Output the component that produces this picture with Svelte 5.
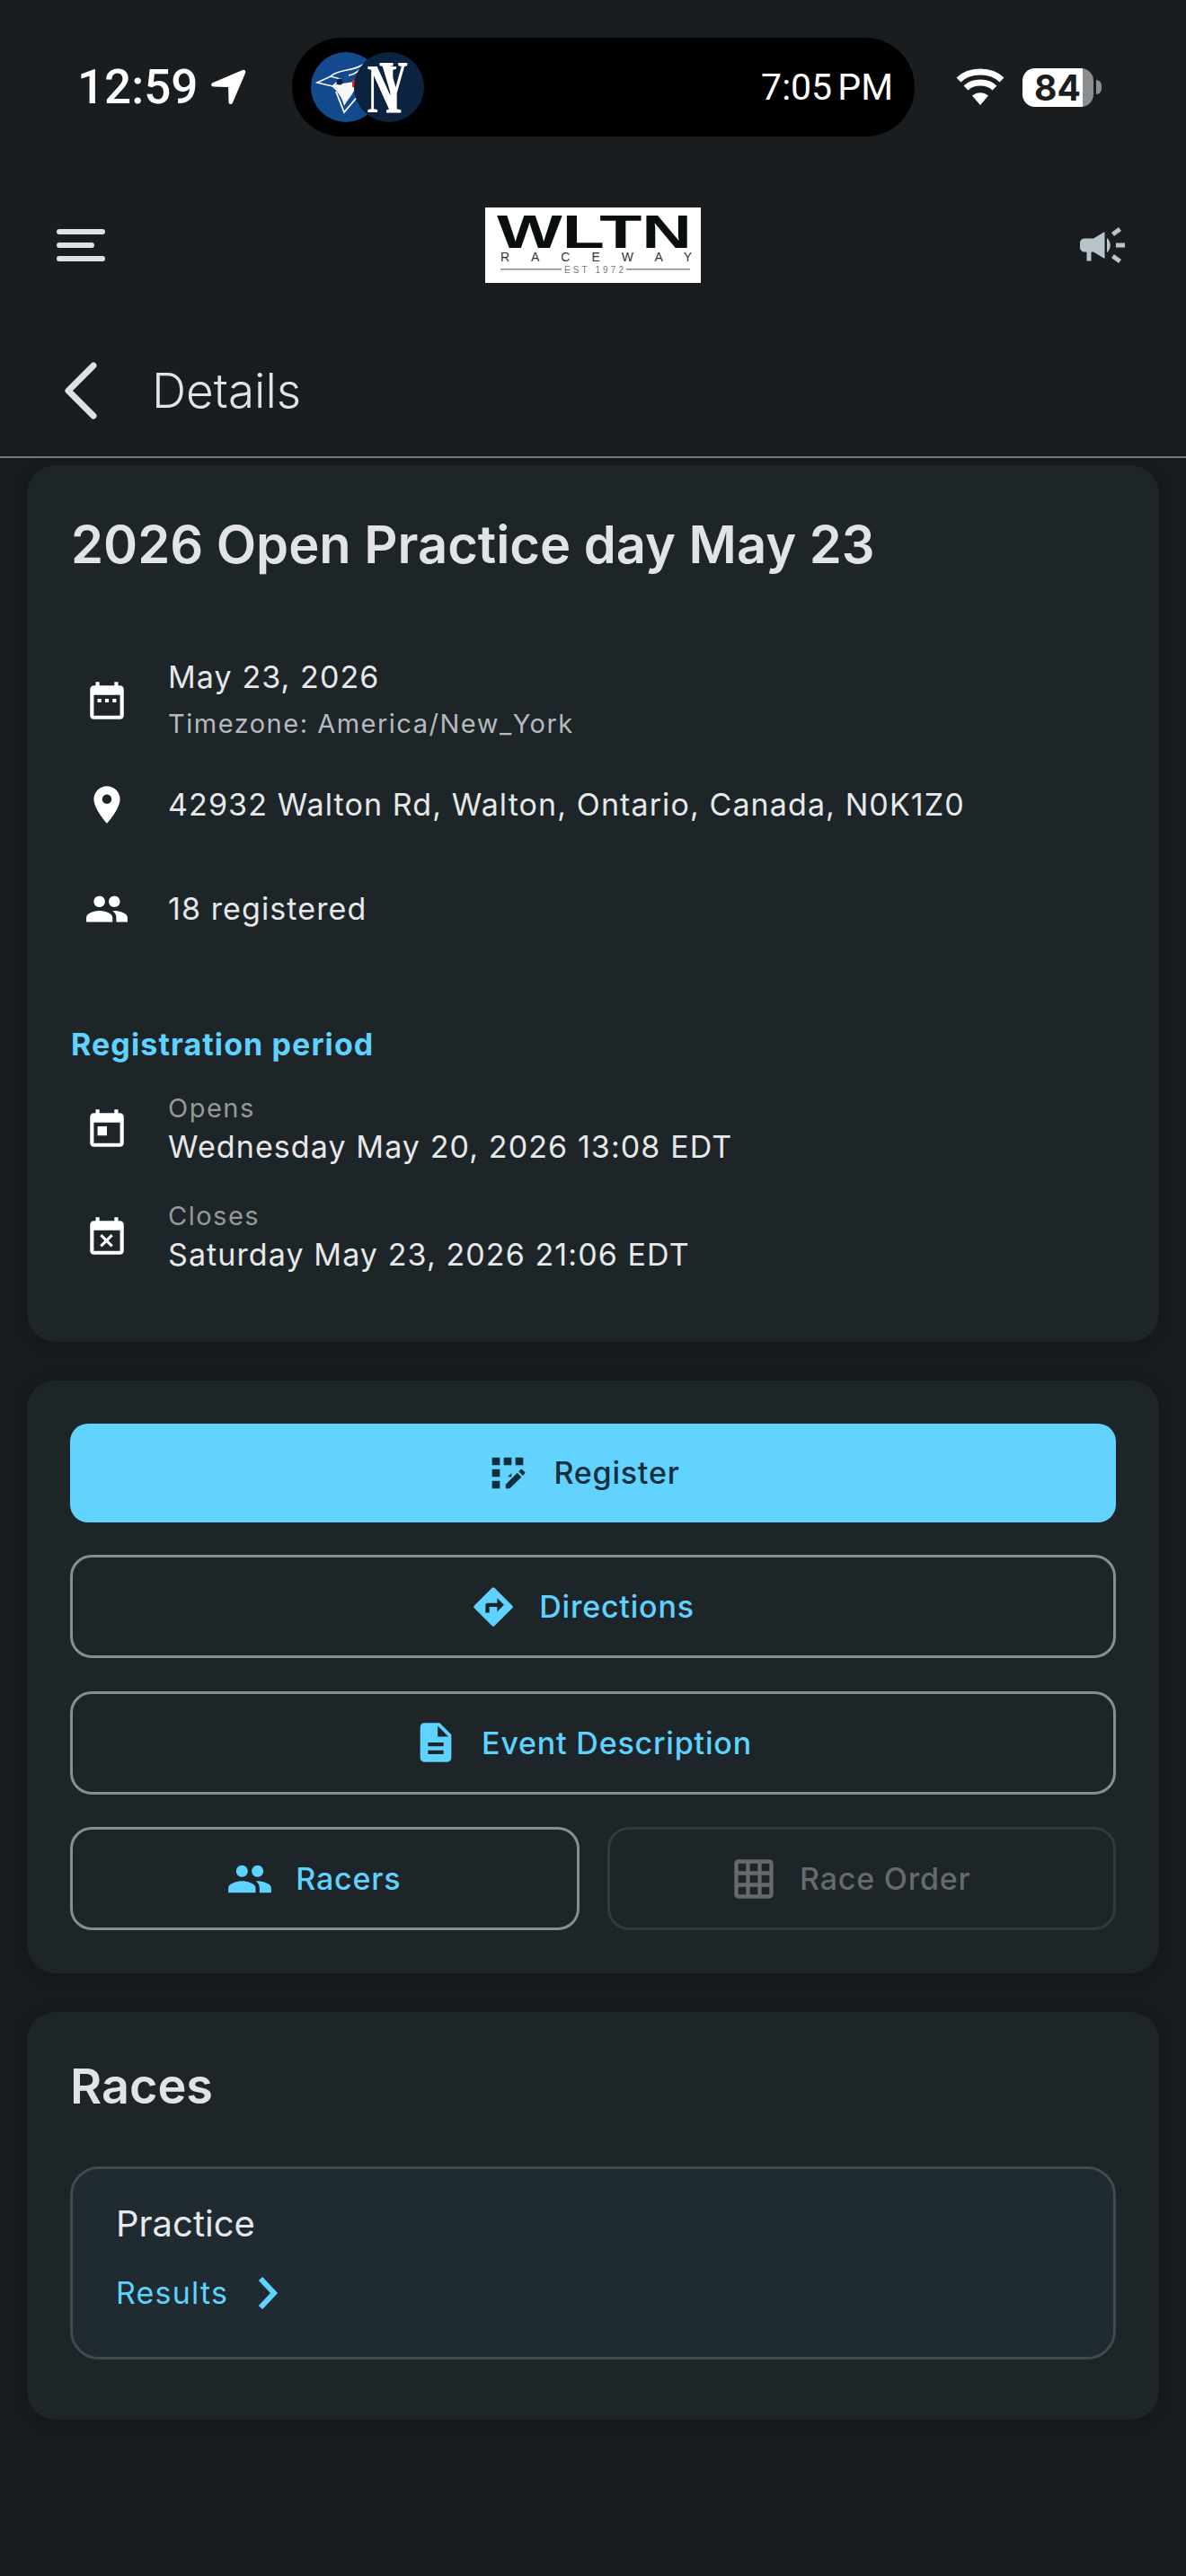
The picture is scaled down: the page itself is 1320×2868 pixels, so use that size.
<script>
  const p = {
    dateRange: "M9 11H7v2h2v-2zm4 0h-2v2h2v-2zm4 0h-2v2h2v-2zm2-7h-1V2h-2v2H8V2H6v2H5c-1.11 0-1.99.9-1.99 2L3 20c0 1.1.89 2 2 2h14c1.1 0 2-.9 2-2V6c0-1.1-.9-2-2-2zm0 16H5V9h14v11z",
    place: "M12 2C8.13 2 5 5.13 5 9c0 5.25 7 13 7 13s7-7.75 7-13c0-3.87-3.13-7-7-7zm0 9.5c-1.38 0-2.5-1.12-2.5-2.5s1.12-2.5 2.5-2.5 2.5 1.12 2.5 2.5-1.12 2.5-2.5 2.5z",
    group: "M16 11c1.66 0 2.99-1.34 2.99-3S17.66 5 16 5c-1.66 0-3 1.34-3 3s1.34 3 3 3zm-8 0c1.66 0 2.99-1.34 2.99-3S9.66 5 8 5C6.34 5 5 6.34 5 8s1.34 3 3 3zm0 2c-2.33 0-7 1.17-7 3.5V19h14v-2.5c0-2.33-4.67-3.5-7-3.5zm8 0c-.29 0-.62.02-.97.05 1.16.84 1.97 1.97 1.97 3.45V19h6v-2.5c0-2.33-4.67-3.5-7-3.5z",
    opens: "M7 11h5v5H7zM19 4h-1V2h-2v2H8V2H6v2H5c-1.11 0-1.99.9-1.99 2L3 20c0 1.1.89 2 2 2h14c1.1 0 2-.9 2-2V6c0-1.1-.9-2-2-2zm0 16H5V9h14v11z",
    closes: "M9.31 18l2.44-2.44L14.19 18l1.06-1.06-2.44-2.44 2.44-2.44L14.19 11l-2.44 2.44L9.31 11l-1.06 1.06 2.44 2.44-2.44 2.44L9.31 18zM19 4h-1V2h-2v2H8V2H6v2H5c-1.11 0-1.99.9-1.99 2L3 20c0 1.1.89 2 2 2h14c1.1 0 2-.9 2-2V6c0-1.1-.9-2-2-2zm0 16H5V9h14v11z",
    register: "M10 4h4v4h-4zM4 16h4v4H4zM4 10h4v4H4zM10 10h4v4h-4zM16 4h4v4h-4zM11 17.86V20h2.1l5.98-5.97-2.12-2.12zM14 12.03V10h-4v4h2.03zM20.85 11.56l-1.41-1.41c-.2-.2-.51-.2-.71 0l-1.06 1.06 2.12 2.12 1.06-1.06c.2-.2.2-.51 0-.71zM4 4h4v4H4z",
    directions: "M21.71 11.29l-9-9a.996.996 0 0 0-1.41 0l-9 9a.996.996 0 0 0 0 1.41l9 9c.39.39 1.02.39 1.41 0l9-9a.996.996 0 0 0 0-1.41zM14 14.5V12h-4v3H8v-4c0-.55.45-1 1-1h5V7.5l3.5 3.5-3.5 3.5z",
    description: "M14 2H6c-1.1 0-1.99.9-1.99 2L4 20c0 1.1.89 2 2 2h12c1.1 0 2-.9 2-2V8l-6-6zm2 16H8v-2h8v2zm0-4H8v-2h8v2zm-3-5V3.5L18.5 9H13z",
    grid: "M20 2H4c-1.1 0-2 .9-2 2v16c0 1.1.9 2 2 2h16c1.1 0 2-.9 2-2V4c0-1.1-.9-2-2-2zM8 20H4v-4h4v4zm0-6H4v-4h4v4zm0-6H4V4h4v4zm6 12h-4v-4h4v4zm0-6h-4v-4h4v4zm0-6h-4V4h4v4zm6 12h-4v-4h4v4zm0-6h-4v-4h4v4zm0-6h-4V4h4v4z",
    campaign: "M18 11v2h4v-2h-4zm-2 6.61c.96.71 2.21 1.65 3.2 2.39.4-.53.8-1.07 1.2-1.6-.99-.74-2.24-1.68-3.2-2.4-.4.54-.8 1.08-1.2 1.61zM20.4 5.6c-.4-.53-.8-1.07-1.2-1.6-.99.74-2.24 1.68-3.2 2.4.4.53.8 1.07 1.2 1.6.96-.72 2.21-1.65 3.2-2.4zM4 9c-1.1 0-2 .9-2 2v2c0 1.1.9 2 2 2h1v4h2v-4h1l5 3V6L8 9H4zm11.5 3c0-1.33-.58-2.53-1.5-3.35v6.69c.92-.81 1.5-2.01 1.5-3.34z",
  };
</script>

<div class="page">
  <header>
    <div class="status">
      <div class="clock">
        <span>12:59</span>
        <svg width="40" height="40" viewBox="0 0 40 40"><path d="M36 1 3 15c-3 1.300-2.200 4.500.8 4.500L20 20l.5 16.500c.1 3 3.500 3.500 4.500.8L39 4.500C40 2 38.500 0 36 1z" fill="#fff"/></svg>
      </div>
      <div class="island">
        <div class="teams">
          <svg class="team" width="78" height="78" viewBox="0 0 78 78">
            <circle cx="39" cy="39" r="39" fill="#134a8e"/>
            <path d="M22 27C30 19 46 22 60 13 54 22 48 25 42 26" fill="none" stroke="#fff" stroke-width="1.500"/>
            <path d="M22 37 48 33V43C44 51 40 54 37 60 35 50 29 43 22 37z" fill="#f4f6f8"/>
            <path d="M28 44 37 67 54 47" fill="none" stroke="#fff" stroke-width="1.800"/>
            <path d="M7 34 22 27 33 30 24 38z" fill="#134a8e" stroke="#fff" stroke-width="1.500"/>
            <circle cx="32" cy="33" r="3.500" fill="#0c2340"/>
            <rect x="46" y="31" width="6" height="8" fill="#e8291c"/>
          </svg>
          <div class="ny">
            <svg class="ny-mark" width="78" height="78" viewBox="0 0 78 78">
              <circle cx="39" cy="39" r="39" fill="#0c2340"/>
              <text transform="translate(31 67) scale(1 1.700)" text-anchor="middle" class="ny-n">N</text>
              <text transform="translate(44 68) scale(.8 1.500)" text-anchor="middle" class="ny-y">Y</text>
            </svg>
          </div>
        </div>
        <span class="game-time">7:05 PM</span>
      </div>
      <div class="sys">
        <svg width="56" height="42" viewBox="0 0 56 42">
          <path d="M28 41 19 30.500C24 26 32 26 37 30.500z" fill="#fff"/>
          <path d="M12 22C20 14 36 14 44 22" fill="none" stroke="#fff" stroke-width="7"/>
          <path d="M4 13C16 1 40 1 52 13" fill="none" stroke="#fff" stroke-width="7"/>
        </svg>
        <div class="battery"><span>84</span></div>
        <div class="nub"></div>
      </div>
    </div>

    <div class="topbar">
      <svg class="burger" width="54" height="36" viewBox="0 0 54 36">
        <rect x="0" y="0" width="54" height="6" rx="3"/>
        <rect x="0" y="15" width="42" height="6" rx="3"/>
        <rect x="0" y="30" width="54" height="6" rx="3"/>
      </svg>
      <svg class="logo" width="240" height="84" viewBox="0 0 240 84">
        <rect width="240" height="84" fill="#fff"/>
        <text x="13" y="45" textLength="217" lengthAdjust="spacingAndGlyphs" class="wltn">WLTN</text>
        <text x="17" y="60" textLength="213" class="raceway">RACEWAY</text>
        <rect x="17" y="68" width="68" height="1.500" fill="#8a8a8a"/>
        <text x="88" y="73" textLength="66" class="est">EST 1972</text>
        <rect x="157" y="68" width="71" height="1.500" fill="#8a8a8a"/>
      </svg>
      <svg class="speaker" width="60" height="60" viewBox="0 0 24 24"><path d={p.campaign}/></svg>
    </div>

    <div class="subbar">
      <svg width="36" height="64" viewBox="0 0 36 64"><path d="M32 4 4 32 32 60" fill="none" stroke="#dfe1e3" stroke-width="7" stroke-linecap="round" stroke-linejoin="round"/></svg>
      <span>Details</span>
    </div>
  </header>

  <main>
    <section class="card info">
      <h1>2026 Open Practice day May 23</h1>

      <div class="row">
        <svg class="ic" viewBox="0 0 24 24"><path d={p.dateRange}/></svg>
        <div>
          <div class="line">May 23, 2026</div>
          <div class="line sub">Timezone: America/New_York</div>
        </div>
      </div>
      <div class="row">
        <svg class="ic" viewBox="0 0 24 24"><path d={p.place}/></svg>
        <div class="line">42932 Walton Rd, Walton, Ontario, Canada, N0K1Z0</div>
      </div>
      <div class="row">
        <svg class="ic" viewBox="0 0 24 24"><path d={p.group}/></svg>
        <div class="line">18 registered</div>
      </div>

      <h2>Registration period</h2>

      <div class="row period">
        <svg class="ic" viewBox="0 0 24 24"><path d={p.opens}/></svg>
        <div>
          <div class="cap">Opens</div>
          <div class="cap-val">Wednesday May 20, 2026 13:08 EDT</div>
        </div>
      </div>
      <div class="row period last">
        <svg class="ic" viewBox="0 0 24 24"><path d={p.closes}/></svg>
        <div>
          <div class="cap">Closes</div>
          <div class="cap-val">Saturday May 23, 2026 21:06 EDT</div>
        </div>
      </div>
    </section>

    <section class="card actions">
      <button class="btn primary">
        <svg viewBox="0 0 24 24"><path d={p.register}/></svg>Register
      </button>
      <button class="btn">
        <svg viewBox="0 0 24 24"><path d={p.directions}/></svg>Directions
      </button>
      <button class="btn">
        <svg viewBox="0 0 24 24"><path d={p.description}/></svg>Event Description
      </button>
      <div class="split">
        <button class="btn">
          <svg viewBox="0 0 24 24"><path d={p.group}/></svg>Racers
        </button>
        <button class="btn off">
          <svg viewBox="0 0 24 24"><path d={p.grid}/></svg>Race Order
        </button>
      </div>
    </section>

    <section class="card races">
      <h3>Races</h3>
      <div class="race">
        <div class="race-name">Practice</div>
        <div class="results">
          <span>Results</span>
          <svg width="24" height="38" viewBox="0 0 24 38"><path d="M4 3 19 19 4 35" fill="none" stroke="#5ed3ff" stroke-width="6"/></svg>
        </div>
      </div>
    </section>
  </main>
</div>

<style>
  :global(body) {
    margin: 0;
    background: #181b1e;
  }

  .page {
    width: 1320px;
    min-height: 2868px;
    font-family: Inter, "Liberation Sans", sans-serif;
    color: #e2e3e5;
  }

  header {
    background: #191d20;
    border-bottom: 2px solid #75797c;
    height: 508px;
  }

  .status {
    display: grid;
    grid-template-columns: 325px 693px 1fr;
    padding-top: 42px;
    height: 110px;
    align-items: center;
  }

  .clock {
    display: flex;
    align-items: center;
    gap: 14px;
    padding-left: 86px;
    font-size: 53px;
    font-weight: 500;
    color: #fff;
    font-family: Roboto, Inter, sans-serif;
  }

  .island {
    height: 110px;
    background: #000;
    border-radius: 55px;
    display: flex;
    align-items: center;
    justify-content: space-between;
    padding: 0 24px 0 21px;
    box-sizing: border-box;
  }

  .teams {
    display: flex;
  }

  .ny {
    margin-left: -30px;
    display: flex;
  }

  .ny-mark {
    overflow: visible;
  }

  .ny-n {
    font: 700 46px "Liberation Serif", serif;
    fill: #fff;
  }

  .ny-y {
    font: 700 56px "Liberation Serif", serif;
    fill: #fff;
  }

  .game-time {
    font-size: 41px;
    color: #fff;
    font-family: Roboto, Inter, sans-serif;
    word-spacing: -4px;
  }

  .sys {
    display: flex;
    align-items: center;
    padding-left: 45px;
  }

  .battery {
    margin-left: 19px;
    width: 79px;
    height: 43px;
    border-radius: 14px;
    background: linear-gradient(90deg, #fff 85%, #8b8d8f 85%);
    color: #1b1d20;
    font-size: 39px;
    font-weight: 700;
    line-height: 43px;
    padding-left: 13px;
    box-sizing: border-box;
  }

  .nub {
    width: 6px;
    height: 16px;
    margin-left: 3px;
    background: #8b8d8f;
    border-radius: 0 8px 8px 0;
  }

  .topbar {
    margin-top: 79px;
    height: 84px;
    display: grid;
    grid-template-columns: 1fr auto 1fr;
    align-items: center;
    padding: 0 63px;
  }

  .burger {
    fill: #dfe1e3;
  }

  .speaker {
    fill: #b9c3ca;
    justify-self: end;
  }

  .wltn {
    font: 700 51px "Liberation Sans", sans-serif;
    fill: #0a0f0e;
  }

  .raceway {
    font: 400 14px "Liberation Sans", sans-serif;
    fill: #333;
  }

  .est {
    font: 400 10px "Liberation Sans", sans-serif;
    fill: #777;
  }

  .subbar {
    padding: 88px 0 0 72px;
    display: flex;
    align-items: center;
    gap: 61px;
    height: 64px;
    font-size: 53px;
    font-weight: 300;
    color: #e2e3e5;
  }

  main {
    padding: 8px 30px 0;
    display: flex;
    flex-direction: column;
    gap: 42.5px;
  }

  .card {
    background: #1e2529;
    border-radius: 32px;
    box-shadow: 0 2px 16px rgba(0, 0, 0, 0.2);
  }

  .info {
    padding: 53px 49px 75px;
  }

  h1 {
    margin: 0 0 81px;
    font-size: 57.8px;
    line-height: 70px;
    font-weight: 600;
    color: #e2e3e5;
  }

  .row {
    display: flex;
    align-items: center;
    gap: 28px;
    height: 116px;
  }

  .ic {
    width: 80px;
    height: 50px;
    flex: none;
    fill: #fff;
  }

  .line {
    font-size: 34px;
    line-height: 52px;
    letter-spacing: 1.1px;
    color: #e6e8ea;
  }

  .sub {
    font-size: 29px;
    letter-spacing: 1.5px;
    color: #b6babd;
  }

  h2 {
    margin: 71px 0 27px;
    font-size: 34px;
    line-height: 44px;
    font-weight: 700;
    letter-spacing: 1.1px;
    color: #5ed3ff;
  }

  .period {
    height: 87px;
    margin-bottom: 33px;
  }

  .period.last {
    margin-bottom: 0;
  }

  .cap {
    font-size: 29px;
    line-height: 43px;
    letter-spacing: 1.5px;
    color: #95999c;
  }

  .cap-val {
    font-size: 34px;
    line-height: 44px;
    letter-spacing: 1.1px;
    color: #e6e8ea;
  }

  .actions {
    padding: 48px;
    display: flex;
    flex-direction: column;
    gap: 36.5px;
  }

  .btn {
    height: 115px;
    width: 100%;
    box-sizing: border-box;
    display: flex;
    align-items: center;
    justify-content: center;
    gap: 25px;
    background: transparent;
    border: 3px solid #888d8f;
    border-radius: 24px;
    color: #5ed3ff;
    font: 500 34px Inter, sans-serif;
    letter-spacing: 0.8px;
    padding: 0 24px 0 0;
  }

  .btn svg {
    width: 52px;
    height: 52px;
    fill: currentColor;
  }

  .primary {
    height: 110px;
    background: #62d2ff;
    border: 0;
    color: #0f2f3f;
    border-radius: 20px;
  }

  .split {
    display: grid;
    grid-template-columns: 1fr 1fr;
    gap: 31px;
  }

  .off {
    border-color: #33393c;
    color: #666a6c;
  }

  .races {
    padding: 53px 48px 67px;
  }

  h3 {
    margin: 0 0 59px;
    font-size: 54px;
    line-height: 60px;
    font-weight: 600;
    color: #e2e3e5;
  }

  .race {
    height: 215px;
    box-sizing: border-box;
    border: 3px solid #43494d;
    border-radius: 32px;
    background: #202a31;
    padding: 37px 0 0 48px;
  }

  .race-name {
    font-size: 40px;
    line-height: 48px;
    font-weight: 400;
    color: #e6e8ea;
  }

  .results {
    margin-top: 33px;
    display: flex;
    align-items: center;
    gap: 32px;
    height: 40px;
    color: #5ed3ff;
    font-size: 34px;
    letter-spacing: 1.2px;
  }
</style>
